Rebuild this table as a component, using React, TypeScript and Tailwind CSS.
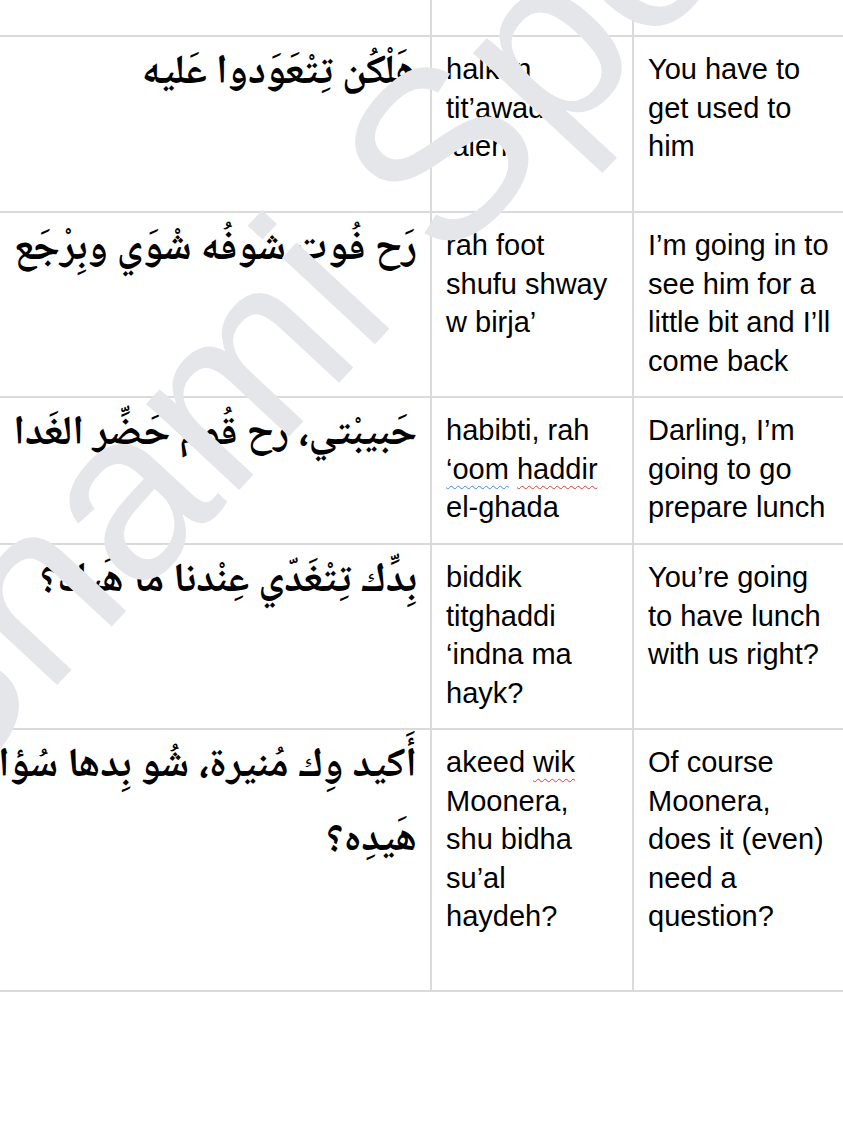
const rows = [
  {
    h: "h-[176px]",
    ar: <>هَلْكُن تِتْعَوَدوا عَليه</>,
    tr: <>halkon tit’awadu ‘aleh</>,
    en: <>You have to get used to him</>,
  },
  {
    h: "h-[185px]",
    ar: <>رَح فُوت شوفُه شْوَي وبِرْجَع</>,
    tr: <>rah foot shufu shway w birja’</>,
    en: <>I’m going in to see him for a little bit and I’ll come back</>,
  },
  {
    h: "h-[147px]",
    ar: <>حَبيبْتي، رَح قُوم حَضِّر الغَدا</>,
    tr: (
      <>
        habibti, rah{" "}
        <span className="underline decoration-wavy decoration-[#4285f4] decoration-1 underline-offset-[6px]">
          ‘oom
        </span>{" "}
        <span className="underline decoration-wavy decoration-[#e53935] decoration-1 underline-offset-[6px]">
          haddir
        </span>{" "}
        el-ghada
      </>
    ),
    en: <>Darling, I’m going to go prepare lunch</>,
  },
  {
    h: "h-[185px]",
    ar: <>بِدِّك تِتْغَدّي عِنْدنا ما هَيك؟</>,
    tr: <>biddik titghaddi ‘indna ma hayk?</>,
    en: <>You’re going to have lunch with us right?</>,
  },
  {
    h: "h-[262px]",
    ar: (
      <>
        أَكيد وِك مُنيرة، شُو بِدها سُؤال
        <br />
        هَيدِه؟
      </>
    ),
    tr: (
      <>
        akeed{" "}
        <span className="underline decoration-wavy decoration-[#e53935] decoration-1 underline-offset-[6px]">
          wik
        </span>{" "}
        Moonera, shu bidha su’al haydeh?
      </>
    ),
    en: <>Of course Moonera, does it (even) need a question?</>,
  },
];

export default function App() {
  return (
    <div className="relative w-[843px] h-[1124px] overflow-hidden bg-white text-black font-['Liberation_Sans',Arial,sans-serif]">
      <div className="-ml-[270px] w-[1120px]">
        {/* tail of the row above */}
        <div className="grid grid-cols-[702px_202px_218px] h-[37px] border-b-2 border-[#dadada]">
          <div className="border-r-2 border-[#dadada]" />
          <div className="border-r-2 border-[#dadada]" />
          <div className="border-r-2 border-[#dadada]" />
        </div>

        {rows.map((r, i) => (
          <div
            key={i}
            className={`grid grid-cols-[702px_202px_218px] border-b-2 border-[#dadada] ${r.h}`}
          >
            <div
              dir="rtl"
              className="border-r-2 border-[#dadada] pr-[13px] text-right text-[41px] font-bold leading-[74px] whitespace-nowrap font-['Noto_Naskh_Arabic','Noto_Sans_Arabic','DejaVu_Sans',sans-serif]"
            >
              {r.ar}
            </div>
            <div className="border-r-2 border-[#dadada] px-[14px] pt-[13px] text-[29px] leading-[38.5px]">
              {r.tr}
            </div>
            <div className="border-r-2 border-[#dadada] px-[14px] pt-[13px] text-[29px] leading-[38.5px]">
              {r.en}
            </div>
          </div>
        ))}
      </div>

      {/* watermark */}
      <div className="pointer-events-none absolute inset-0 overflow-hidden">
        <span className="absolute left-[-212px] top-[676px] origin-top-left -rotate-[47deg] whitespace-nowrap text-[240px] leading-none text-[#e5e6ea] font-['Liberation_Sans',Arial,sans-serif]">
          Shami Spoken
        </span>
      </div>
    </div>
  );
}
